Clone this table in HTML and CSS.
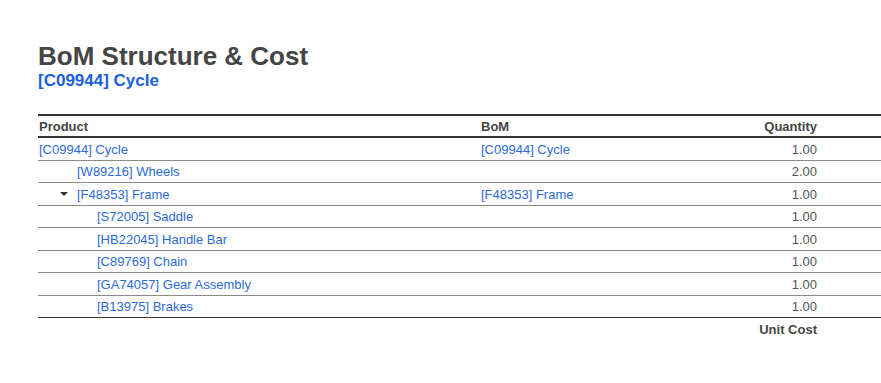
FILE: index.html
```html
<!DOCTYPE html>
<html>
<head>
<meta charset="utf-8">
<link rel="stylesheet" href="styles.css">
</head>
<body>
<div class="page">
  <h1 class="title">BoM Structure &amp; Cost</h1>
  <h2 class="subtitle"><a href="#">[C09944] Cycle</a></h2>
  <table class="bom">
    <thead>
      <tr>
        <th class="c-prod">Product</th>
        <th class="c-bom">BoM</th>
        <th class="c-qty">Quantity</th>
        <th class="c-pad"></th>
      </tr>
    </thead>
    <tbody>
      <tr>
        <td class="c-prod"><a href="#">[C09944] Cycle</a></td>
        <td class="c-bom"><a href="#">[C09944] Cycle</a></td>
        <td class="c-qty">1.00</td>
        <td class="c-pad"></td>
      </tr>
      <tr>
        <td class="c-prod lvl1"><a href="#">[W89216] Wheels</a></td>
        <td class="c-bom"></td>
        <td class="c-qty">2.00</td>
        <td class="c-pad"></td>
      </tr>
      <tr>
        <td class="c-prod lvl1 has-caret"><span class="caret"></span><a href="#">[F48353] Frame</a></td>
        <td class="c-bom"><a href="#">[F48353] Frame</a></td>
        <td class="c-qty">1.00</td>
        <td class="c-pad"></td>
      </tr>
      <tr>
        <td class="c-prod lvl2"><a href="#">[S72005] Saddle</a></td>
        <td class="c-bom"></td>
        <td class="c-qty">1.00</td>
        <td class="c-pad"></td>
      </tr>
      <tr>
        <td class="c-prod lvl2"><a href="#">[HB22045] Handle Bar</a></td>
        <td class="c-bom"></td>
        <td class="c-qty">1.00</td>
        <td class="c-pad"></td>
      </tr>
      <tr>
        <td class="c-prod lvl2"><a href="#">[C89769] Chain</a></td>
        <td class="c-bom"></td>
        <td class="c-qty">1.00</td>
        <td class="c-pad"></td>
      </tr>
      <tr>
        <td class="c-prod lvl2"><a href="#">[GA74057] Gear Assembly</a></td>
        <td class="c-bom"></td>
        <td class="c-qty">1.00</td>
        <td class="c-pad"></td>
      </tr>
      <tr>
        <td class="c-prod lvl2"><a href="#">[B13975] Brakes</a></td>
        <td class="c-bom"></td>
        <td class="c-qty">1.00</td>
        <td class="c-pad"></td>
      </tr>
    </tbody>
    <tfoot>
      <tr>
        <td class="c-prod"></td>
        <td class="c-qty total" colspan="2">Unit Cost</td>
        <td class="c-pad"></td>
      </tr>
    </tfoot>
  </table>
</div>
</body>
</html>
```
FILE: styles.css
```css
html, body {
  margin: 0;
  padding: 0;
  background: #ffffff;
  overflow: hidden;
}
body {
  font-family: "Liberation Sans", Arial, sans-serif;
  font-size: 13px;
  color: #4c4c4c;
}
a {
  color: #2c6ad8;
  text-decoration: none;
}
.page {
  padding: 41px 0 0 38px;
}
.title {
  margin: 0;
  font-size: 26px;
  line-height: 30px;
  font-weight: bold;
  color: #454545;
}
.subtitle {
  margin: 0 0 23px 0;
  font-size: 17px;
  line-height: 20px;
  font-weight: bold;
}
.subtitle a {
  color: #1a5fe0;
}
.bom {
  border-collapse: collapse;
  width: 843px;
  table-layout: fixed;
}
.bom th, .bom td {
  padding: 1.5px 1px 0.5px 1px;
  line-height: 19.5px;
  text-align: left;
  white-space: nowrap;
}
.bom th {
  font-weight: bold;
  color: #454545;
  border-top: 2px solid #333333;
  border-bottom: 2px solid #333333;
  line-height: 18px;
  padding-top: 2px;
  padding-bottom: 0px;
}
.bom tbody td {
  border-bottom: 1px solid #8a8a8a;
}
.bom tbody tr:last-child td {
  border-bottom: 1px solid #333333;
}
.c-prod { width: 440px; }
.c-bom { width: 280px; }
.c-qty { width: 54px; text-align: right !important; }
.c-pad { width: 66px; }
td.c-qty { color: #555555; }
.lvl1 { padding-left: 39px !important; }
.lvl2 { padding-left: 59px !important; }
.has-caret { padding-left: 22px !important; }
.caret {
  display: inline-block;
  width: 0;
  height: 0;
  border-left: 4px solid transparent;
  border-right: 4px solid transparent;
  border-top: 4px solid #333333;
  vertical-align: middle;
  margin-right: 9px;
  margin-bottom: 2px;
}
.total {
  font-weight: bold;
  color: #454545 !important;
}
```
